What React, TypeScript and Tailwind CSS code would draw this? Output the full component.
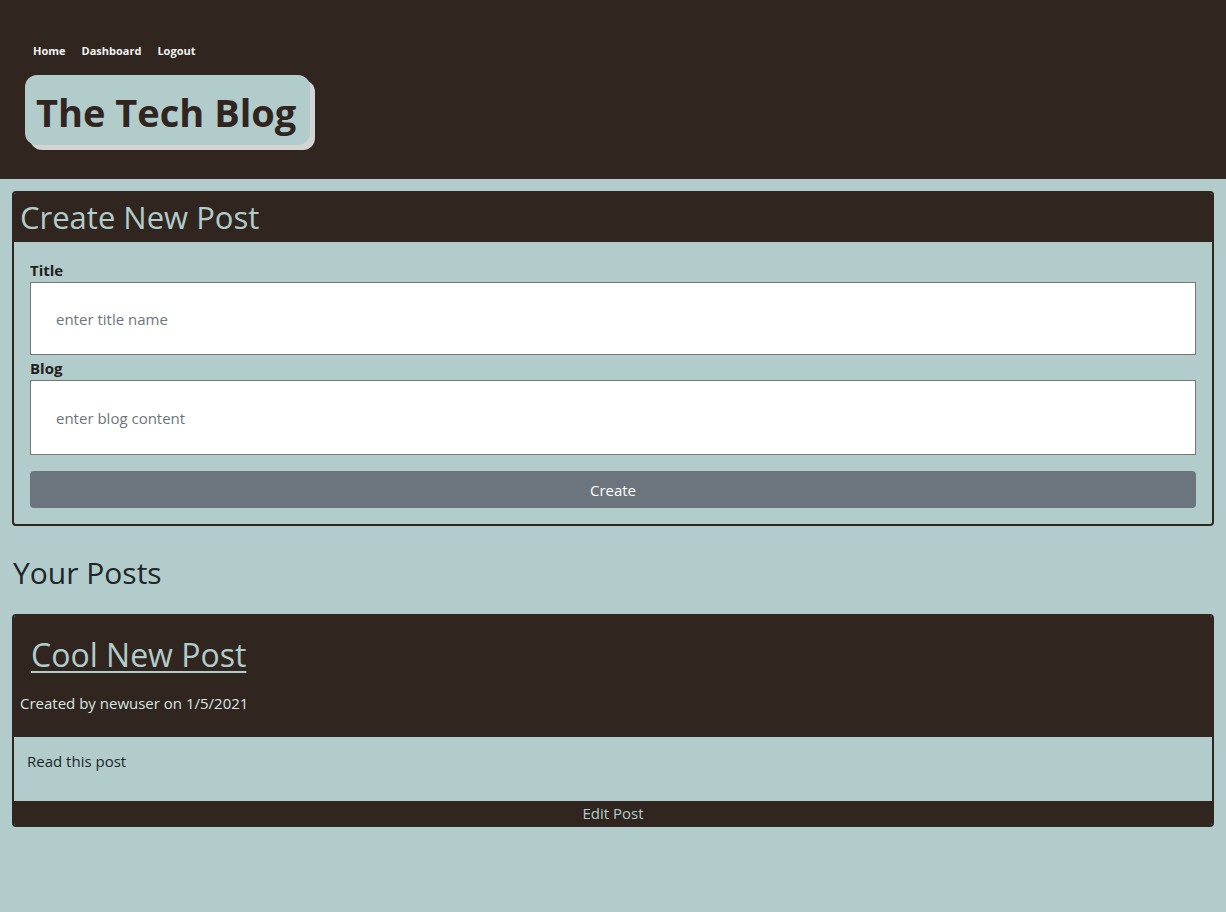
const font = { fontFamily: '"Open Sans", "Noto Sans", sans-serif' };

export default function App() {
  return (
    <div className="min-h-[912px] bg-[#b2cccc] text-[15px] leading-6 text-[#212529]" style={font}>
      {/* Header */}
      <header className="h-[179px] bg-[#31261f]">
        <nav className="flex gap-[16px] pl-[33px] pt-[43px] text-[11px] font-bold leading-4 text-[#f2f2f2]">
          <a href="#">Home</a>
          <a href="#">Dashboard</a>
          <a href="#">Logout</a>
        </nav>
        <div className="ml-[25px] mt-[16px] flex h-[70px] w-[285px] items-center rounded-[12px] bg-[#b2cccc] pl-[11px] pt-[3px] shadow-[5px_5px_0_#d4d4d4]">
          <h1 className="text-[38px] font-bold leading-none text-[#31261f]">The Tech Blog</h1>
        </div>
      </header>

      <main className="px-[12px] pt-[12px]">
        {/* Create card */}
        <section className="overflow-hidden rounded-[4px] border-2 border-[#31261f]">
          <div className="flex h-[49px] items-center bg-[#31261f] pl-[6px]">
            <h2 className="text-[31px] font-medium leading-none text-[#b2cccc]">Create New Post</h2>
          </div>
          <form className="flex flex-col px-[16px] pb-[16px] pt-[16px]">
            <label className="font-bold leading-6 text-[#24201c]">Title</label>
            <input
              placeholder="enter title name"
              className="h-[73px] border border-[#767676] bg-white px-[25px] text-[15px] text-[#212529] outline-none placeholder:text-[#6c757d]"
            />
            <label className="mt-px font-bold leading-6 text-[#24201c]">Blog</label>
            <input
              placeholder="enter blog content"
              className="h-[75px] border border-[#767676] bg-white px-[25px] text-[15px] text-[#212529] outline-none placeholder:text-[#6c757d]"
            />
            <button type="button" className="mt-[16px] h-[37px] rounded-[4px] bg-[#6c757d] text-white">
              Create
            </button>
          </form>
        </section>

        <h2 className="mt-[28px] pl-px text-[30px] font-medium leading-[38px] text-[#212529]">Your Posts</h2>

        {/* Post card */}
        <section className="mt-[22px] overflow-hidden rounded-[4px] border-2 border-[#31261f]">
          <div className="flex h-[121px] flex-col bg-[#31261f]">
            <h3 className="mt-[20px] pl-[17px] text-[32px] font-medium leading-[38px] text-[#b2cccc]">
              <a href="#" className="underline decoration-[2px] underline-offset-[4px]">Cool New Post</a>
            </h3>
            <p className="mt-[17px] pl-[6px] text-[#d8e4e4]">Created by newuser on 1/5/2021</p>
          </div>
          <div className="h-[64px] bg-[#b2cccc] pl-[13px] pt-[12px] text-[#212529]">Read this post</div>
          <div className="flex h-[24px] items-center justify-center bg-[#31261f] text-[#b2cccc]">Edit Post</div>
        </section>
      </main>
    </div>
  );
}
